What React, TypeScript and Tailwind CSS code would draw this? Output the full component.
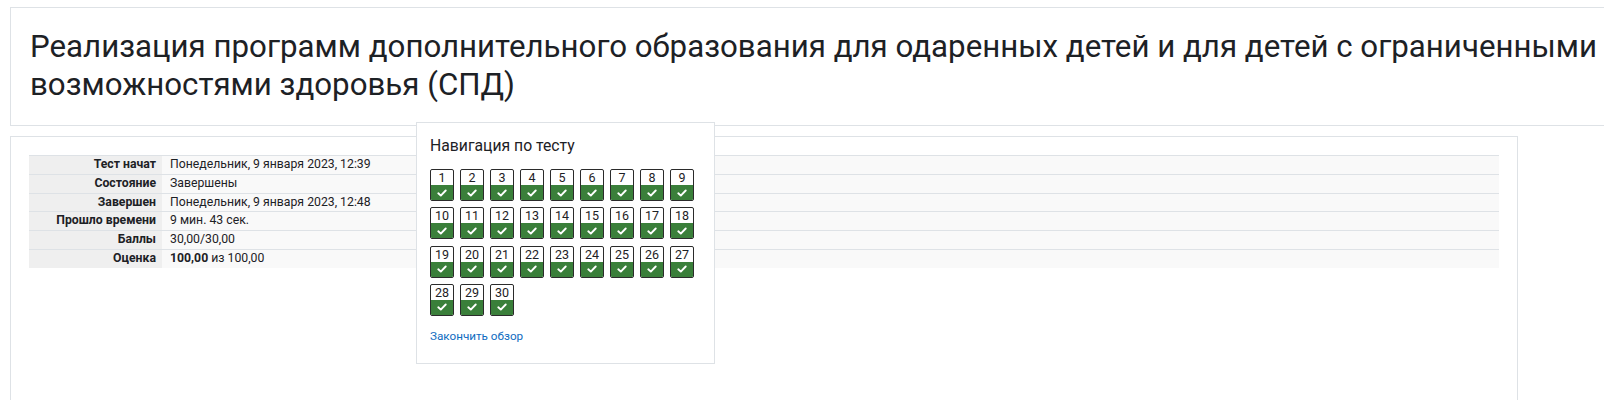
import React from "react";

const rows: { label: string; value: React.ReactNode }[] = [
  { label: "Тест начат", value: "Понедельник, 9 января 2023, 12:39" },
  { label: "Состояние", value: "Завершены" },
  { label: "Завершен", value: "Понедельник, 9 января 2023, 12:48" },
  { label: "Прошло времени", value: "9 мин. 43 сек." },
  { label: "Баллы", value: "30,00/30,00" },
  {
    label: "Оценка",
    value: (
      <>
        <b>100,00</b> из 100,00
      </>
    ),
  },
];

function Check() {
  return (
    <svg width="10" height="8" viewBox="0 0 10 8" className="block">
      <path d="M1.3 4.3 L3.8 6.6 L8.7 1.5" fill="none" stroke="#ffffff" strokeWidth="1.9" strokeLinecap="round" strokeLinejoin="round" />
    </svg>
  );
}

function QButton({ n }: { n: number }) {
  return (
    <div className="w-[24px] h-[32px] border border-[#2b2b2b] rounded-[2px] overflow-hidden flex flex-col bg-white">
      <div className="h-[15px] flex items-center justify-center text-[12.5px] leading-[15px] text-[#1d2125]">{n}</div>
      <div className="flex-1 bg-[#3a7f3a] flex items-center justify-center">
        <Check />
      </div>
    </div>
  );
}

export default function App() {
  const nums = Array.from({ length: 30 }, (_, i) => i + 1);
  return (
    <div className="relative w-[1604px] h-[400px] overflow-hidden bg-white font-['Roboto',sans-serif] text-[#1d2125]">
      <div className="pt-[7px] pl-[10px]">
        <div className="w-[1680px] border border-[#dee2e6] px-[19px] pt-[20px] pb-[22px]">
          <h1 className="text-[31.25px] leading-[37.5px] font-normal text-[#1d2125] w-[1600px]">
            Реализация программ дополнительного образования для одаренных детей и для детей с ограниченными возможностями здоровья (СПД)
          </h1>
        </div>
      </div>
      <div className="ml-[10px] mt-[10px] w-[1508px] h-[300px] border border-[#dee2e6] pt-[18px] px-[18px]">
        <table className="w-full border-collapse text-[12.25px] leading-[15.75px]">
          <tbody>
            {rows.map((r) => (
              <tr key={r.label} className="border-t border-[#dee2e6]">
                <th className="w-[133px] bg-[#efefef] text-right font-bold pr-[6px] py-[1px] whitespace-nowrap">{r.label}</th>
                <td className="bg-[#f9f9f9] text-left pl-[8px] py-[1px]">{r.value}</td>
              </tr>
            ))}
          </tbody>
        </table>
      </div>
      <div className="absolute left-[416px] top-[122px] w-[299px] h-[242px] bg-white border border-[#dee2e6] px-[13px] pt-[13px]">
        <div className="text-[15.75px] leading-[19px] text-[#1d2125]">Навигация по тесту</div>
        <div className="mt-[14px] grid grid-cols-[repeat(9,24px)] gap-x-[6px] gap-y-[6.3px]">
          {nums.map((n) => (
            <QButton key={n} n={n} />
          ))}
        </div>
        <a className="block mt-[13px] text-[11.7px] leading-[14px] text-[#0f6cbf]" href="#">
          Закончить обзор
        </a>
      </div>
    </div>
  );
}
